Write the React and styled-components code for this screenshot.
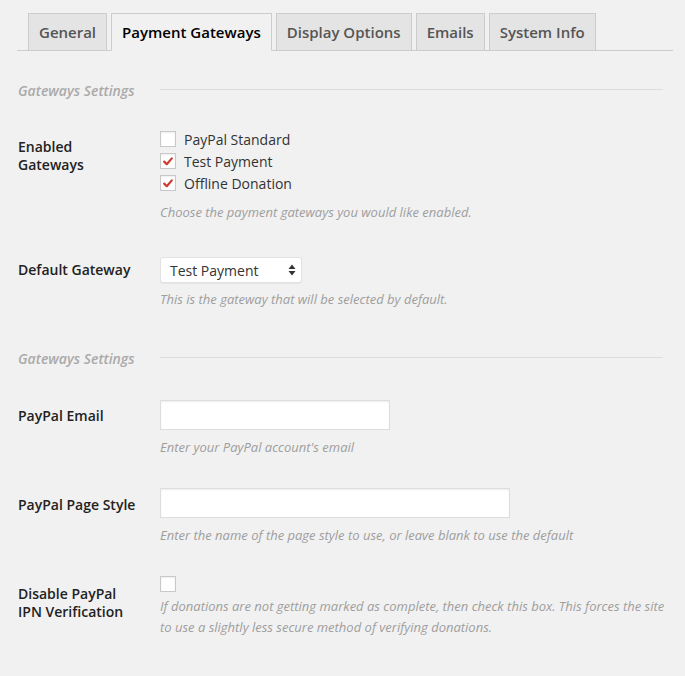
import styled, { createGlobalStyle } from "styled-components"

const GlobalStyle = createGlobalStyle`
  html, body {
    margin: 0;
    padding: 0;
    background: #f1f1f1;
  }
  body {
    font-family: "Open Sans", "Liberation Sans", sans-serif;
    color: #222;
  }
`

const tabs = ["General", "Payment Gateways", "Display Options", "Emails", "System Info"]

export default function App() {
  return (
    <Page>
      <GlobalStyle />
      <TabBar>
        {tabs.map((t) => (
          <Tab key={t} $active={t === "Payment Gateways"}>{t}</Tab>
        ))}
      </TabBar>

      <Content>
        <SectionTitle $top={29}>
          <span>Gateways Settings</span>
          <Rule />
        </SectionTitle>

        <Row $top={28}>
          <Label $pad={10}>Enabled<br />Gateways</Label>
          <Field>
            <CheckList>
              <CheckItem><Check /> PayPal Standard</CheckItem>
              <CheckItem><Check checked /> Test Payment</CheckItem>
              <CheckItem><Check checked /> Offline Donation</CheckItem>
            </CheckList>
            <Desc $top={8}>Choose the payment gateways you would like enabled.</Desc>
          </Field>
        </Row>

        <Row $top={34}>
          <Label $pad={4}>Default Gateway</Label>
          <Field>
            <Select>
              <span>Test Payment</span>
              <svg width="8" height="12" viewBox="0 0 8 12">
                <path d="M4 0.5 L7.5 5 L0.5 5 Z M4 11.5 L7.5 7 L0.5 7 Z" fill="#333" />
              </svg>
            </Select>
            <Desc $top={6}>This is the gateway that will be selected by default.</Desc>
          </Field>
        </Row>

        <SectionTitle $top={38}>
          <span>Gateways Settings</span>
          <Rule />
        </SectionTitle>

        <Row $top={32}>
          <Label $pad={7}>PayPal Email</Label>
          <Field>
            <TextInput $width={230} />
            <Desc $top={7}>Enter your PayPal account's email</Desc>
          </Field>
        </Row>

        <Row $top={30}>
          <Label $pad={8}>PayPal Page Style</Label>
          <Field>
            <TextInput $width={350} />
            <Desc $top={7}>Enter the name of the page style to use, or leave blank to use the default</Desc>
          </Field>
        </Row>

        <Row $top={30}>
          <Label $pad={9}>Disable PayPal<br />IPN Verification</Label>
          <Field>
            <Check />
            <Desc $top={4}>
              If donations are not getting marked as complete, then check this box. This forces the site
              to use a slightly less secure method of verifying donations.
            </Desc>
          </Field>
        </Row>
      </Content>
    </Page>
  )
}

function Check({ checked }) {
  return (
    <Box>
      {checked && (
        <svg width="12" height="12" viewBox="0 0 12 12">
          <path d="M2.2 6.6 L4.8 9.2 L9.8 3.4" fill="none" stroke="#cc3b2f" strokeWidth="2.2" strokeLinecap="round" strokeLinejoin="round" />
        </svg>
      )}
    </Box>
  )
}

const Page = styled.div`
  width: 685px;
  height: 676px;
  overflow: hidden;
`

const TabBar = styled.nav`
  display: flex;
  align-items: flex-end;
  margin: 0 12px 0 17px;
  padding: 13px 0 0 7px;
  border-bottom: 1px solid #ccc;
`

const Tab = styled.div`
  margin-left: 4px;
  margin-bottom: -1px;
  padding: 6px 10px;
  font-size: 15px;
  line-height: 24px;
  font-weight: 600;
  border: 1px solid #ccc;
  border-bottom: 1px solid ${(p) => (p.$active ? "#f1f1f1" : "#ccc")};
  background: ${(p) => (p.$active ? "#f1f1f1" : "#e4e4e4")};
  color: ${(p) => (p.$active ? "#000" : "#555")};
  white-space: nowrap;
`

const Content = styled.div`
  padding-left: 18px;
  width: 660px;
`

const SectionTitle = styled.div`
  display: grid;
  grid-template-columns: 142px 1fr;
  align-items: center;
  margin-top: ${(p) => p.$top}px;
  height: 20px;
  font-size: 14px;
  font-style: italic;
  font-weight: 600;
  color: #aaa;
`

const Rule = styled.div`
  height: 1px;
  background: #ddd;
  margin-right: 15px;
  margin-top: -2px;
`

const Row = styled.div`
  display: grid;
  grid-template-columns: 142px 1fr;
  margin-top: ${(p) => p.$top}px;
`

const Label = styled.div`
  padding-top: ${(p) => p.$pad}px;
  font-size: 14px;
  line-height: 18px;
  font-weight: 600;
  color: #222;
`

const Field = styled.div`
  display: flex;
  flex-direction: column;
  align-items: flex-start;
`

const CheckList = styled.div`
  display: flex;
  flex-direction: column;
`

const CheckItem = styled.label`
  display: flex;
  align-items: center;
  gap: 8px;
  height: 22px;
  font-size: 14px;
  color: #333;
`

const Box = styled.span`
  display: inline-flex;
  align-items: center;
  justify-content: center;
  box-sizing: border-box;
  width: 16px;
  height: 16px;
  background: #fff;
  border: 1px solid #c8c8c8;
  box-shadow: inset 0 1px 2px rgba(0, 0, 0, 0.07);
`

const Desc = styled.p`
  margin: ${(p) => p.$top}px 0 0;
  font-size: 13px;
  line-height: 21px;
  font-style: italic;
  color: #9e9e9e;
  max-width: 520px;
`

const Select = styled.div`
  box-sizing: border-box;
  display: flex;
  align-items: center;
  justify-content: space-between;
  width: 142px;
  height: 26px;
  padding: 0 5px 0 9px;
  background: #fff;
  border: 1px solid #e2e2e2;
  border-radius: 3px;
  box-shadow: 0 1px 1px rgba(0, 0, 0, 0.05);
  font-size: 14px;
  color: #333;
`

const TextInput = styled.input`
  box-sizing: border-box;
  width: ${(p) => p.$width}px;
  height: 30px;
  margin: 0;
  background: #fff;
  border: 1px solid #ddd;
  box-shadow: inset 0 1px 2px rgba(0, 0, 0, 0.07);
  outline: none;
`
